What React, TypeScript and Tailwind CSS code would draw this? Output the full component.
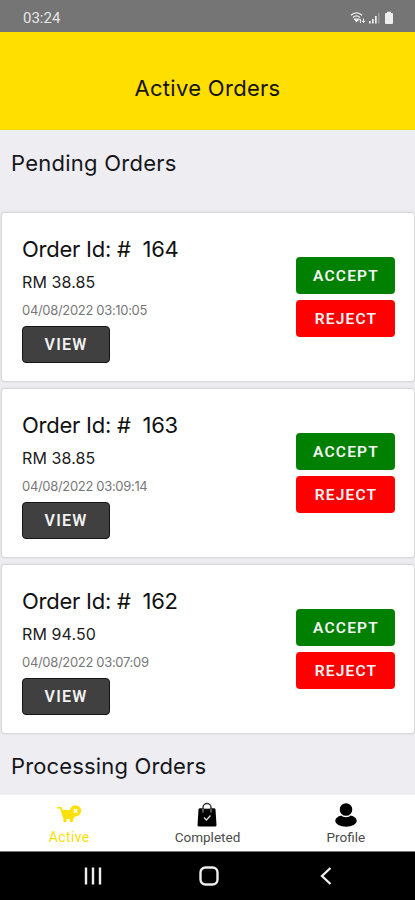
type Order = {
  id: number
  price: string
  date: string
}

const orders: Order[] = [
  { id: 164, price: "38.85", date: "04/08/2022 03:10:05" },
  { id: 163, price: "38.85", date: "04/08/2022 03:09:14" },
  { id: 162, price: "94.50", date: "04/08/2022 03:07:09" },
]

const StatusBar = () => (
  <div className="h-8 shrink-0 bg-[#757575] flex items-center justify-between pl-[23px] pr-[21px] pt-[3px]">
    <span className="font-['Roboto',sans-serif] text-[15px] leading-5 text-[#e6e6e6]">03:24</span>
    <div className="flex items-center text-[#eeeeee]">
      <svg width="16" height="14" viewBox="0 0 16 14" fill="none" stroke="currentColor" strokeWidth="1.3">
        <path d="M1 4.2C4 1 9 1 12 4.2" />
        <path d="M3 6.5c2.2-2 4.8-2 7 0" />
        <path d="M4.7 8.2h3.6L6.5 10.5Z" fill="currentColor" />
        <path d="M10.4 12V8M8.9 9.5l1.5-1.6M13.5 7.5v4M15 9.8l-1.5 1.7L12 9.8" strokeWidth="1" />
      </svg>
      <svg width="12" height="14" viewBox="0 0 12 14" fill="currentColor" className="ml-0.5">
        <path d="M1 10h1.700v2.500H1zM4 8h1.700v4.500H4zM7 5h1.700v7.500H7z" />
        <path d="M10 2h1.500v10.500H10z" opacity=".3" />
      </svg>
      <svg width="10" height="14" viewBox="0 0 10 14" fill="currentColor" className="ml-1">
        <path d="M3 0.8h4V2h1a1 1 0 0 1 1 1v9a1 1 0 0 1-1 1H2a1 1 0 0 1-1-1V3a1 1 0 0 1 1-1h1z" />
      </svg>
    </div>
  </div>
)

const OrderCard = ({ item }: { item: Order }) => {
  return (
    <article className="h-[168px] shrink-0 ml-[2px] mr-[1px] rounded-[3px] bg-white shadow-[0_0_2px_1px_#d2d2d6] flex justify-between pl-5 pr-[19px]">
      <div className="flex flex-col items-start pt-[21px]">
        <h2 className="h-[30px] text-[22px] leading-[30px] tracking-[-0.25px] whitespace-pre text-[#111]">Order Id: #  {item.id}</h2>
        <p className="mt-[6px] text-[16px] leading-6 tracking-[0.1px] text-[#1c1c1c]">RM {item.price}</p>
        <p className="mt-[6px] text-[13px] leading-5 tracking-[-0.32px] text-[#777]">{item.date}</p>
        <button className="mt-[6px] h-[37px] w-[88px] pt-px rounded-[4px] border border-[#151515] bg-[#404040] font-['Roboto',sans-serif] text-[16px] font-semibold tracking-[1.2px] text-[#f2f2f2]">
          VIEW
        </button>
      </div>
      <div className="w-[99px] pt-11 flex flex-col gap-[6px] font-['Roboto',sans-serif] text-[15.5px] font-semibold tracking-[1.2px] text-[#f5f5f5]">
        <button className="h-[37px] pt-[3px] pl-px rounded-[4px] bg-[#008000]">ACCEPT</button>
        <button className="h-[37px] pt-[3px] pl-px rounded-[4px] bg-[#ff0000]">REJECT</button>
      </div>
    </article>
  )
}

const TabBar = () => (
  <nav className="h-[57px] shrink-0 bg-white border-b border-[#777] grid grid-cols-3 font-['Roboto',sans-serif] text-[13.5px] leading-[18px] text-[#4a4a4a]">
    <div className="flex flex-col items-center pt-[7px] text-[#fbe005]">
      <svg width="26" height="26" viewBox="0 0 26 26">
        <path d="M1 5h4l1.8 3H14a6.500 6.500 0 0 0 5 6.200L17.500 17H7.500L4 6.500H1z" fill="currentColor" />
        <circle cx="9" cy="18.500" r="1.800" fill="currentColor" />
        <circle cx="15.500" cy="18.500" r="1.800" fill="currentColor" />
        <circle cx="19.500" cy="8.800" r="5.600" fill="currentColor" />
        <path d="M17.700 7l3.600 3.600m0-3.600l-3.600 3.600" stroke="#fff" strokeWidth="1.600" />
      </svg>
      <span className="text-[14px] tracking-[0.4px]">Active</span>
    </div>
    <div className="flex flex-col items-center pt-[7px]">
      <svg width="24" height="26" viewBox="0 0 24 26" fill="none">
        <path d="M3.500 7.500a1.500 1.500 0 0 1 1.500-1.200h14a1.500 1.500 0 0 1 1.500 1.200l1 15.500a1.500 1.500 0 0 1-1.500 1.500H4A1.500 1.500 0 0 1 2.500 23z" fill="#000" />
        <path d="M8 7V5.500a4 4 0 0 1 8 0V7" stroke="#333" strokeWidth="1.500" />
        <path d="M8 7v3.500M16 7v3.500M9 6.500h6" stroke="#aaa" strokeWidth="1" />
        <path d="M9 15.500l2.500 2.500 4-4.500" stroke="#ddd" strokeWidth="1.300" />
      </svg>
      <span>Completed</span>
    </div>
    <div className="flex flex-col items-center pt-[7px]">
      <svg width="24" height="26" viewBox="0 0 24 26" fill="#000">
        <ellipse cx="12" cy="18.800" rx="10.800" ry="6" />
        <circle cx="12" cy="7.500" r="7" stroke="#fff" strokeWidth="1.400" />
      </svg>
      <span>Profile</span>
    </div>
  </nav>
)

const SystemNav = () => (
  <div className="h-12 shrink-0 bg-black grid grid-cols-3 text-[#eee]">
    <div className="flex items-center justify-end pr-9">
      <svg width="18" height="18" viewBox="0 0 18 18" stroke="currentColor" strokeWidth="2.4">
        <path d="M2 .5v17M9 .5v17M16 .5v17" />
      </svg>
    </div>
    <div className="flex items-center justify-center pl-[3px]">
      <svg width="20" height="20" viewBox="0 0 20 20" fill="none" stroke="currentColor" strokeWidth="2.4">
        <rect x="1.500" y="1.500" width="17" height="17" rx="5" />
      </svg>
    </div>
    <div className="flex items-center pl-[43px]">
      <svg width="12" height="18" viewBox="0 0 12 18" fill="none" stroke="currentColor" strokeWidth="2.3">
        <path d="M10.500 1L2 9l8.500 8" />
      </svg>
    </div>
  </div>
)

const App = () => {
  return (
    <div className="h-[900px] w-[415px] overflow-hidden flex flex-col bg-[#ededf2] font-['Inter',sans-serif]">
      <StatusBar />
      <header className="h-[98px] shrink-0 bg-[#ffdf00] flex items-center justify-center pt-[14px]">
        <h1 className="text-[22px] leading-8 tracking-[0.3px] text-[#151300]">Active Orders</h1>
      </header>
      <main className="h-[665px] shrink-0 overflow-hidden">
        <h2 className="h-[83px] pl-[11px] pt-[18px] text-[22px] leading-[30px] tracking-[0.25px] text-[#17171b]">Pending Orders</h2>
        <section className="flex flex-col gap-2">
          {orders.map((item) => (
            <OrderCard key={item.id} item={item} />
          ))}
        </section>
        <h2 className="pl-[11px] pt-[18px] text-[22px] leading-[30px] tracking-[0.15px] text-[#17171b]">Processing Orders</h2>
      </main>
      <TabBar />
      <SystemNav />
    </div>
  )
}

export default App
